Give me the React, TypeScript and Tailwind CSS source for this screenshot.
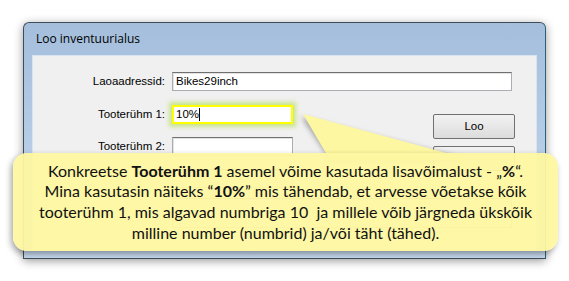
export default function App() {
  const label = "w-[139px] text-right pr-[7px] text-[11.5px] leading-none text-black";
  const field = "h-[19px] bg-white border border-[#abadb3] border-t-[#707070] shadow-[inset_1px_1px_0_#e3e3e3]";
  const button = "w-[82px] h-[25px] border border-[#707070] rounded-[2px] bg-gradient-to-b from-[#f2f2f2] to-[#dcdcdc] text-[11.5px] text-black";

  return (
    <div className="relative w-[569px] h-[281px] bg-white overflow-hidden font-['Liberation_Sans',Arial,sans-serif]">
      {/* Dialog window */}
      <div className="ml-[23px] mt-[22px] w-[523px] h-[237px] flex flex-col rounded-t-[6px] border border-[#3f4d5a] border-r-[#2f5f78] bg-gradient-to-b from-[#a4bedc] to-[#c7daef] shadow-[0_2px_10px_rgba(0,0,0,0.4)]">
        <div className="h-[32px] flex items-center pl-[12px] font-['Open_Sans',sans-serif] text-[12px] text-black">
          Loo inventuurialus
        </div>
        <div className="flex flex-1 px-[8px] pb-[7px]">
          <div className="flex-1 bg-[#f0f0f0] border border-[#d9e4f1] pt-[16px]">
            <div className="flex items-center">
              <span className={label}>Laoaadressid:</span>
              <div className={`${field} w-[340px] flex items-center pl-[3px] text-[11.5px]`}>Bikes29inch</div>
            </div>
            <div className="flex mt-[14px]">
              <div className="w-[260px] flex flex-col gap-[13px]">
                <div className="flex items-center">
                  <span className={label}>Tooterühm 1:</span>
                  <div className="h-[19px] w-[121px] bg-white border-2 border-[#ffff00] shadow-[0_0_4px_3px_rgba(190,225,110,0.75)] flex items-center pl-[2px] text-[11.5px]">
                    10%<span className="inline-block w-px h-[13px] bg-black" />
                  </div>
                </div>
                <div className="flex items-center">
                  <span className={label}>Tooterühm 2:</span>
                  <div className={`${field} w-[121px]`} />
                </div>
                <div className="flex items-center">
                  <span className={label} />
                  <div className={`${field} w-[121px]`} />
                </div>
              </div>
              <div className="ml-auto mr-[21px] mt-[9px] flex flex-col gap-[7px]">
                <button className={button}>Loo</button>
                <button className={button} />
              </div>
            </div>
            <div className="flex mt-[10px]">
              <span className={label} />
              <div className={`${field} w-[340px] h-[30px]`} />
            </div>
          </div>
        </div>
      </div>

      {/* Callout pointer */}
      <svg className="absolute left-0 top-0" width="569" height="281" viewBox="0 0 569 281">
        <defs>
          <filter id="sh" x="-20%" y="-20%" width="140%" height="140%">
            <feGaussianBlur stdDeviation="2.5" />
          </filter>
        </defs>
        <polygon points="301,117 330,160 470,160" fill="rgba(0,0,0,0.3)" filter="url(#sh)" />
        <polygon points="303,114 330,160 472,160" fill="#fdf7a1" />
      </svg>

      {/* Callout */}
      <div className="absolute left-[13px] top-[153px] w-[545px] h-[98px] rounded-[14px] bg-[#fdf7a1]/95 shadow-[-2px_3px_6px_rgba(0,0,0,0.35)] flex flex-col items-center justify-center font-['Lato',sans-serif] text-[16px] leading-[20.7px] text-[#111] whitespace-nowrap">
        <p>Konkreetse <b>Tooterühm 1</b> asemel võime kasutada lisavõimalust - „<b>%</b>“.</p>
        <p>Mina kasutasin näiteks “<b>10%</b>” mis tähendab, et arvesse võetakse kõik</p>
        <p>tooterühm 1, mis algavad numbriga 10&nbsp; ja millele võib järgneda ükskõik</p>
        <p>milline number (numbrid) ja/või täht (tähed).</p>
      </div>
    </div>
  );
}
